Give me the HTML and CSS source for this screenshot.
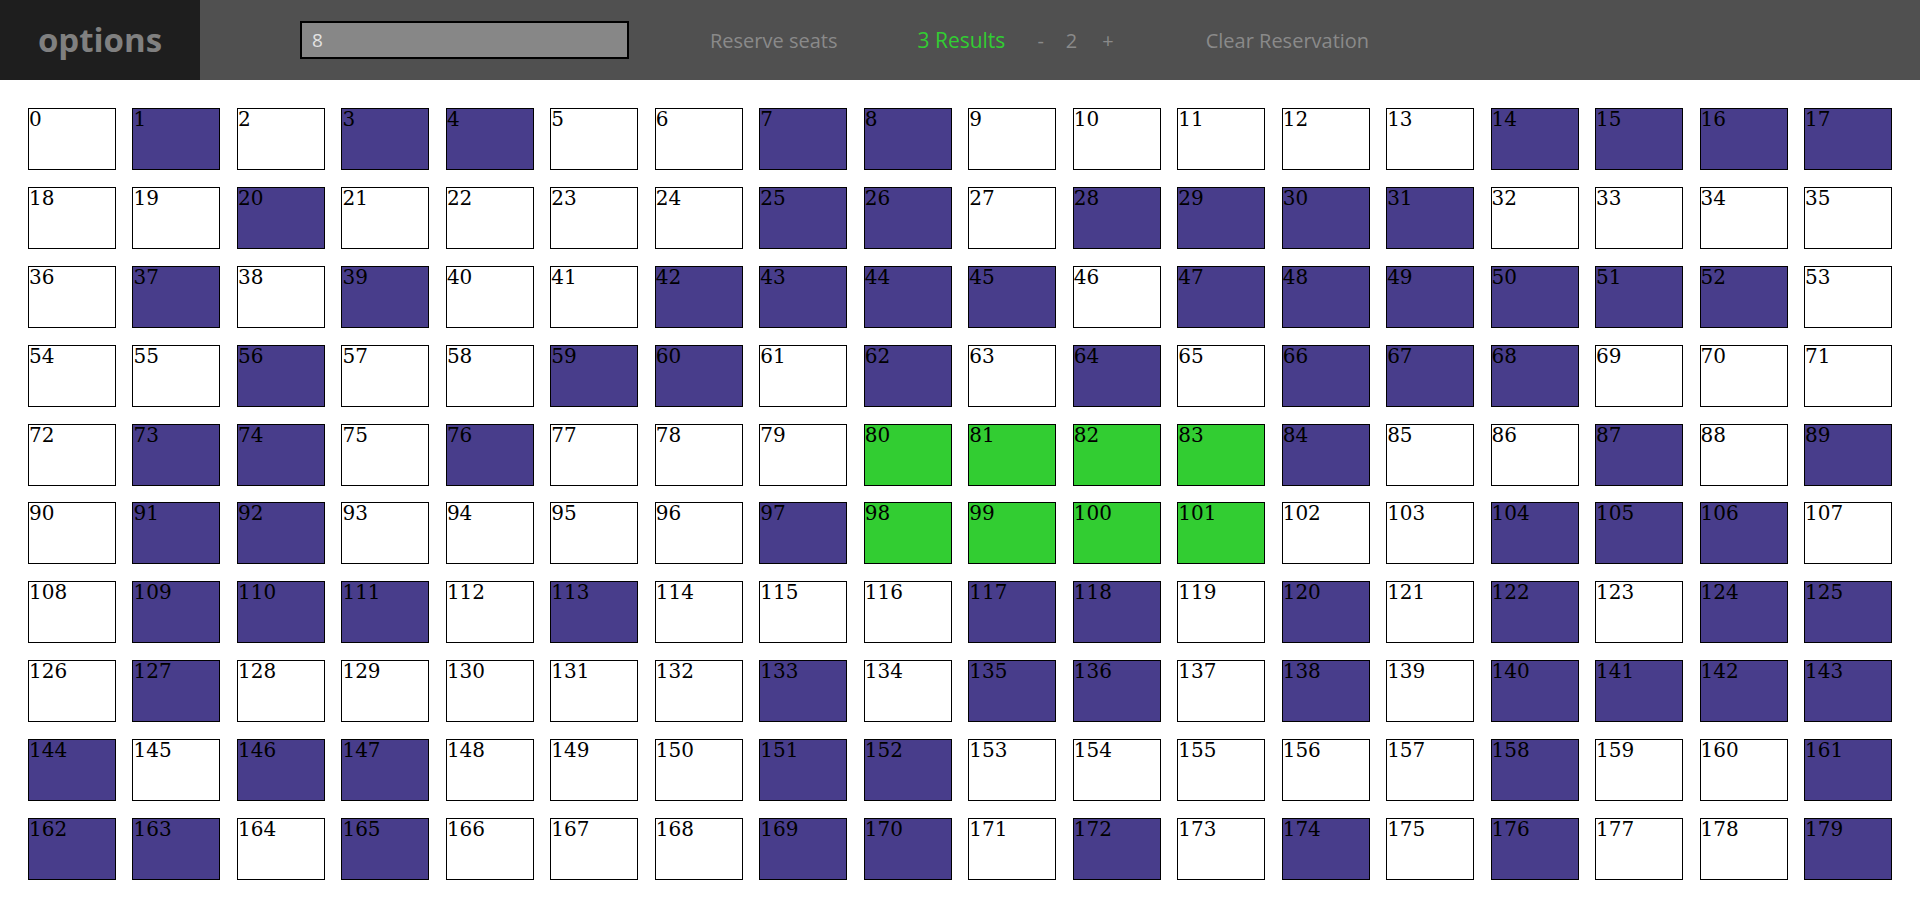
FILE: index.html
```html
<!DOCTYPE html>
<html>
<head>
<meta charset="utf-8">
<link rel="stylesheet" href="styles.css">
</head>
<body>
<header class="bar">
  <div class="brand">options</div>
  <input class="search" type="text" value="8">
  <span class="link reserve">Reserve seats</span>
  <span class="results">3 Results</span>
  <span class="ctrl minus">-</span>
  <span class="ctrl count">2</span>
  <span class="ctrl plus">+</span>
  <span class="link clear">Clear Reservation</span>
</header>
<main class="grid">
<div class="seat">0</div><div class="seat taken">1</div><div class="seat">2</div><div class="seat taken">3</div><div class="seat taken">4</div><div class="seat">5</div><div class="seat">6</div><div class="seat taken">7</div><div class="seat taken">8</div><div class="seat">9</div><div class="seat">10</div><div class="seat">11</div><div class="seat">12</div><div class="seat">13</div><div class="seat taken">14</div><div class="seat taken">15</div><div class="seat taken">16</div><div class="seat taken">17</div>
<div class="seat">18</div><div class="seat">19</div><div class="seat taken">20</div><div class="seat">21</div><div class="seat">22</div><div class="seat">23</div><div class="seat">24</div><div class="seat taken">25</div><div class="seat taken">26</div><div class="seat">27</div><div class="seat taken">28</div><div class="seat taken">29</div><div class="seat taken">30</div><div class="seat taken">31</div><div class="seat">32</div><div class="seat">33</div><div class="seat">34</div><div class="seat">35</div>
<div class="seat">36</div><div class="seat taken">37</div><div class="seat">38</div><div class="seat taken">39</div><div class="seat">40</div><div class="seat">41</div><div class="seat taken">42</div><div class="seat taken">43</div><div class="seat taken">44</div><div class="seat taken">45</div><div class="seat">46</div><div class="seat taken">47</div><div class="seat taken">48</div><div class="seat taken">49</div><div class="seat taken">50</div><div class="seat taken">51</div><div class="seat taken">52</div><div class="seat">53</div>
<div class="seat">54</div><div class="seat">55</div><div class="seat taken">56</div><div class="seat">57</div><div class="seat">58</div><div class="seat taken">59</div><div class="seat taken">60</div><div class="seat">61</div><div class="seat taken">62</div><div class="seat">63</div><div class="seat taken">64</div><div class="seat">65</div><div class="seat taken">66</div><div class="seat taken">67</div><div class="seat taken">68</div><div class="seat">69</div><div class="seat">70</div><div class="seat">71</div>
<div class="seat">72</div><div class="seat taken">73</div><div class="seat taken">74</div><div class="seat">75</div><div class="seat taken">76</div><div class="seat">77</div><div class="seat">78</div><div class="seat">79</div><div class="seat picked">80</div><div class="seat picked">81</div><div class="seat picked">82</div><div class="seat picked">83</div><div class="seat taken">84</div><div class="seat">85</div><div class="seat">86</div><div class="seat taken">87</div><div class="seat">88</div><div class="seat taken">89</div>
<div class="seat">90</div><div class="seat taken">91</div><div class="seat taken">92</div><div class="seat">93</div><div class="seat">94</div><div class="seat">95</div><div class="seat">96</div><div class="seat taken">97</div><div class="seat picked">98</div><div class="seat picked">99</div><div class="seat picked">100</div><div class="seat picked">101</div><div class="seat">102</div><div class="seat">103</div><div class="seat taken">104</div><div class="seat taken">105</div><div class="seat taken">106</div><div class="seat">107</div>
<div class="seat">108</div><div class="seat taken">109</div><div class="seat taken">110</div><div class="seat taken">111</div><div class="seat">112</div><div class="seat taken">113</div><div class="seat">114</div><div class="seat">115</div><div class="seat">116</div><div class="seat taken">117</div><div class="seat taken">118</div><div class="seat">119</div><div class="seat taken">120</div><div class="seat">121</div><div class="seat taken">122</div><div class="seat">123</div><div class="seat taken">124</div><div class="seat taken">125</div>
<div class="seat">126</div><div class="seat taken">127</div><div class="seat">128</div><div class="seat">129</div><div class="seat">130</div><div class="seat">131</div><div class="seat">132</div><div class="seat taken">133</div><div class="seat">134</div><div class="seat taken">135</div><div class="seat taken">136</div><div class="seat">137</div><div class="seat taken">138</div><div class="seat">139</div><div class="seat taken">140</div><div class="seat taken">141</div><div class="seat taken">142</div><div class="seat taken">143</div>
<div class="seat taken">144</div><div class="seat">145</div><div class="seat taken">146</div><div class="seat taken">147</div><div class="seat">148</div><div class="seat">149</div><div class="seat">150</div><div class="seat taken">151</div><div class="seat taken">152</div><div class="seat">153</div><div class="seat">154</div><div class="seat">155</div><div class="seat">156</div><div class="seat">157</div><div class="seat taken">158</div><div class="seat">159</div><div class="seat">160</div><div class="seat taken">161</div>
<div class="seat taken">162</div><div class="seat taken">163</div><div class="seat">164</div><div class="seat taken">165</div><div class="seat">166</div><div class="seat">167</div><div class="seat">168</div><div class="seat taken">169</div><div class="seat taken">170</div><div class="seat">171</div><div class="seat taken">172</div><div class="seat">173</div><div class="seat taken">174</div><div class="seat">175</div><div class="seat taken">176</div><div class="seat">177</div><div class="seat">178</div><div class="seat taken">179</div>
</main>
</body>
</html>
```
FILE: styles.css
```css
html, body {
  margin: 0;
  padding: 0;
  background: #ffffff;
}

.bar {
  display: flex;
  align-items: center;
  height: 80px;
  background: #505050;
  font-family: "Open Sans", "DejaVu Sans", sans-serif;
}

.brand {
  width: 200px;
  height: 80px;
  background: #1e1e1e;
  color: #808080;
  font-weight: 700;
  font-size: 33px;
  display: flex;
  align-items: center;
  justify-content: center;
  padding-bottom: 2px;
  box-sizing: border-box;
}

.search {
  box-sizing: border-box;
  width: 329px;
  height: 38px;
  margin-left: 100px;
  border: 2px solid #000;
  background: #878787;
  color: #e2e2e2;
  font-family: "Open Sans", "DejaVu Sans", sans-serif;
  font-size: 19px;
  padding: 0 10px;
  outline: none;
}

.link, .ctrl {
  color: #8a8a8a;
  font-size: 20px;
}

.reserve {
  margin-left: 81px;
}

.results {
  margin-left: 80px;
  color: #32cd32;
  font-size: 21px;
}

.minus {
  margin-left: 32px;
}

.count {
  margin-left: 22px;
}

.plus {
  margin-left: 25px;
}

.clear {
  margin-left: 92px;
}

.grid {
  display: grid;
  grid-template-columns: repeat(18, 1fr);
  grid-auto-rows: 62px;
  column-gap: 16.5px;
  row-gap: 16.9px;
  padding: 28px 28px 0 28px;
}

.seat {
  box-sizing: border-box;
  border: 1px solid #000;
  background: #fff;
  color: #000;
  font-family: "DejaVu Serif", serif;
  font-size: 20px;
  line-height: 20px;
}

.taken {
  background: #483d8b;
}

.picked {
  background: #32cd32;
}
```
